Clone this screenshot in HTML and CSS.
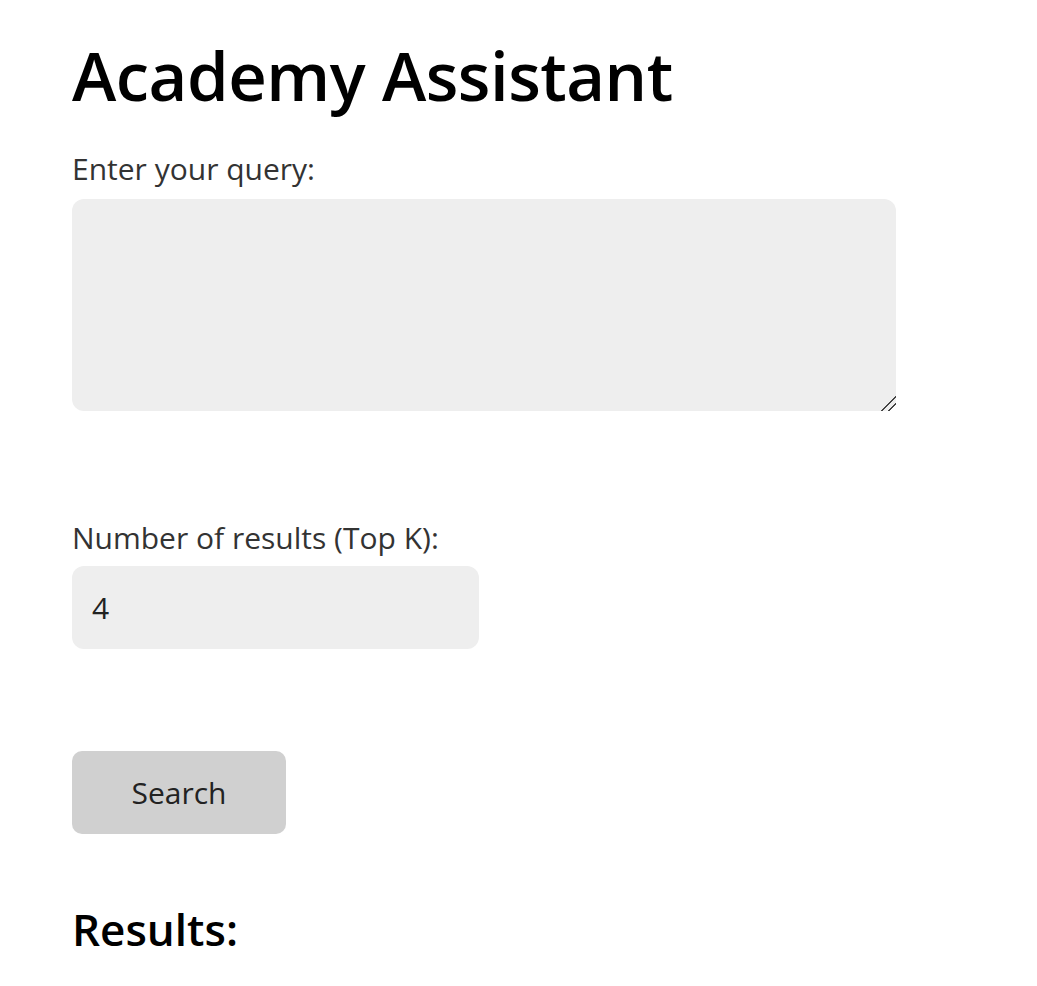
FILE: index.html
```html
<!DOCTYPE html>
<html lang="en">
<head>
<meta charset="utf-8">
<title>Academy Assistant</title>
<link rel="stylesheet" href="styles.css">
</head>
<body>
<main class="page">
  <h1 class="title">Academy Assistant</h1>
  <label class="label" for="query">Enter your query:</label>
  <textarea id="query" class="query"></textarea>
  <label class="label label-k" for="topk">Number of results (Top K):</label>
  <input id="topk" class="topk" type="number" value="4">
  <button class="search" type="button">Search</button>
  <h2 class="results">Results:</h2>
</main>
</body>
</html>
```
FILE: styles.css
```css
html, body {
  margin: 0;
  padding: 0;
  background: #fff;
}
.page {
  display: flex;
  flex-direction: column;
  align-items: flex-start;
  padding: 32px 0 0 72px;
  font-family: "Open Sans", "Noto Sans", sans-serif;
}
.title {
  margin: 0;
  font-size: 67px;
  line-height: 86px;
  font-weight: 600;
  color: #000;
  letter-spacing: -0.5px;
}
.label {
  display: block;
  margin-top: 31px;
  font-size: 30px;
  line-height: 40px;
  color: #333;
}
.query {
  box-sizing: border-box;
  width: 824px;
  height: 212px;
  margin-top: 10px;
  border: none;
  border-radius: 12px;
  background: #eee;
  padding: 16px 20px;
  font: inherit;
  font-size: 30px;
  outline: none;
  resize: vertical;
}
.query::-webkit-resizer {
  background: linear-gradient(135deg,
    transparent 48%, #444 48%, #444 55%, transparent 55%,
    transparent 72%, #444 72%, #444 79%, transparent 79%);
}
.label-k {
  margin-top: 107px;
}
.topk {
  box-sizing: border-box;
  width: 407px;
  height: 83px;
  margin-top: 8px;
  border: none;
  border-radius: 12px;
  background: #eee;
  padding: 0 20px;
  font: inherit;
  font-size: 30px;
  color: #222;
  outline: none;
  -moz-appearance: textfield;
}
.topk::-webkit-inner-spin-button,
.topk::-webkit-outer-spin-button {
  -webkit-appearance: none;
  margin: 0;
}
.search {
  box-sizing: border-box;
  width: 214px;
  height: 83px;
  margin-top: 102px;
  border: none;
  border-radius: 10px;
  background: #d0d0d0;
  font: inherit;
  font-size: 30px;
  color: #222;
  cursor: pointer;
}
.results {
  margin: 65px 0 0;
  font-size: 44px;
  line-height: 60px;
  font-weight: 600;
  color: #000;
}
```
